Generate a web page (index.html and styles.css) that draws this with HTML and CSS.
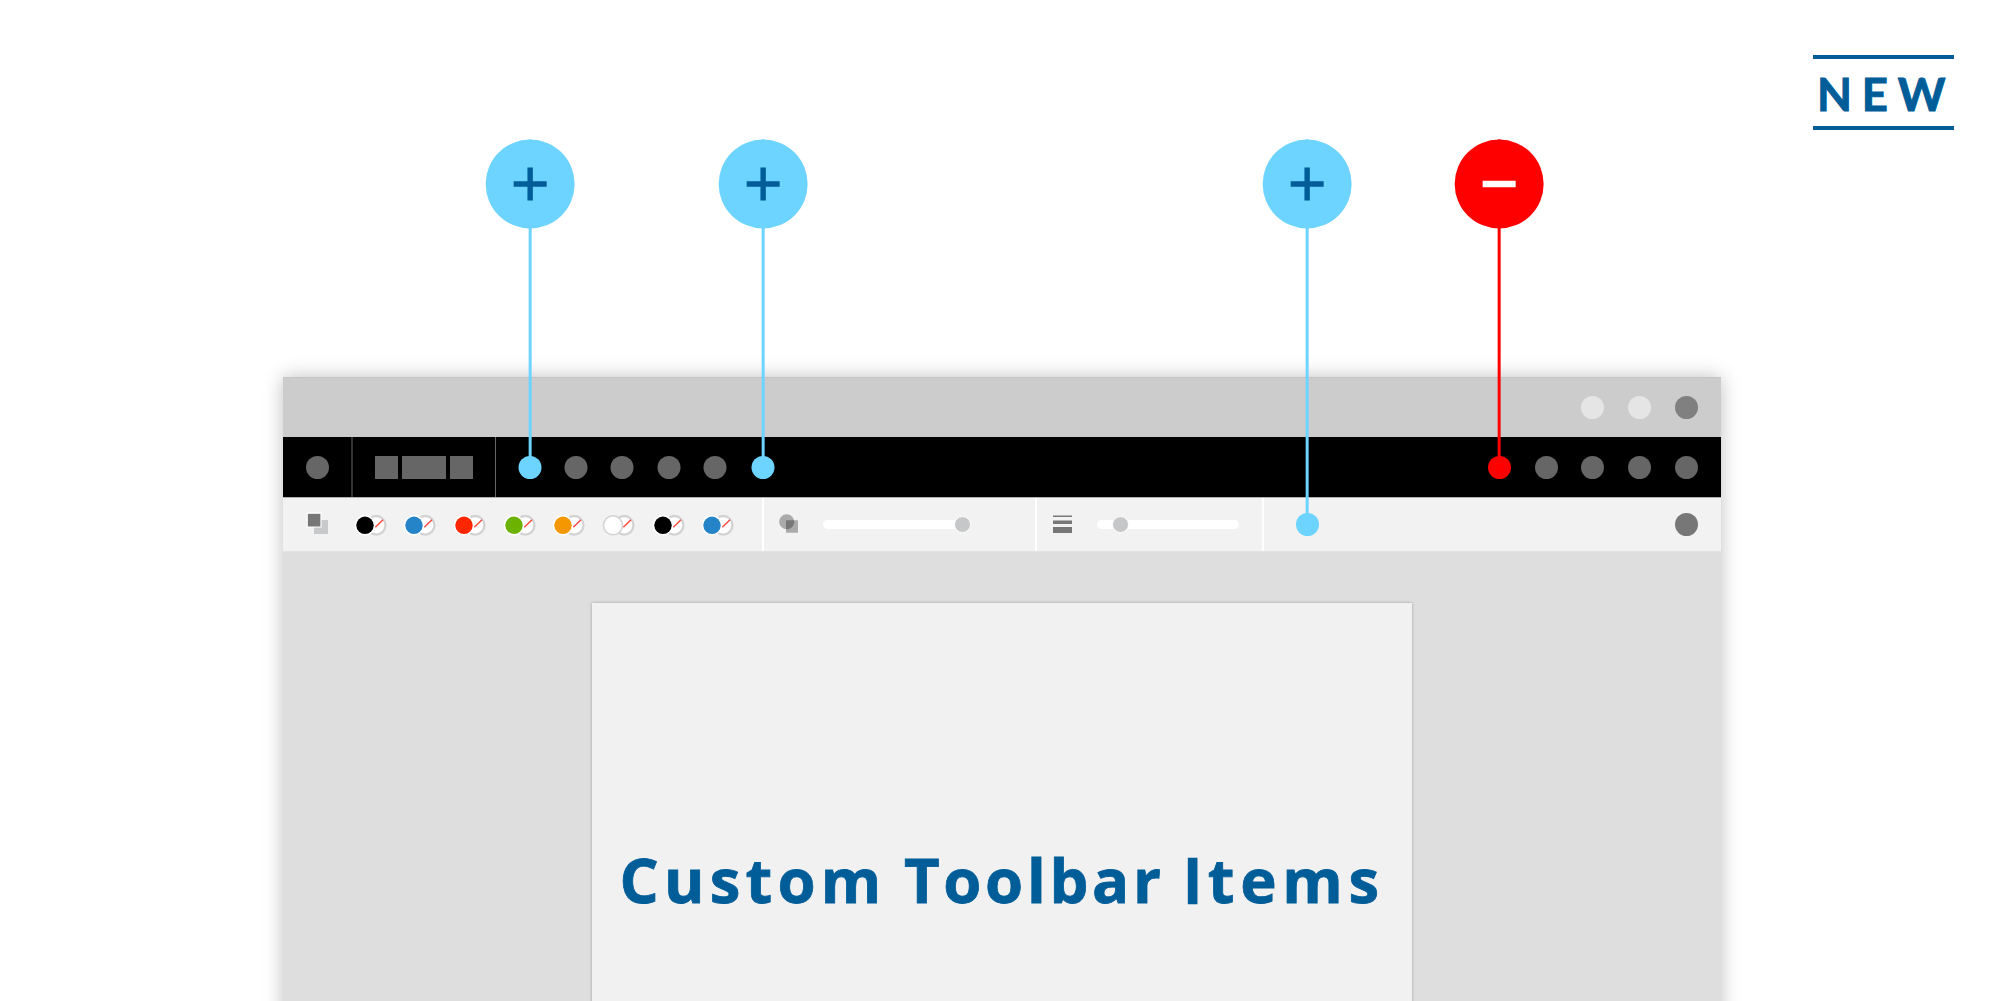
FILE: index.html
```html
<!DOCTYPE html>
<html lang="en">
<head>
<meta charset="utf-8">
<title>Custom Toolbar Items</title>
<link rel="stylesheet" href="styles.css">
</head>
<body>
<svg class="defs" width="0" height="0" aria-hidden="true">
  <symbol id="stroke-none" viewBox="0 0 34 24">
    <circle cx="22.2" cy="12.3" r="9.3" fill="#fff" stroke="#d3d3d3" stroke-width="2.3"/>
    <path d="M21.3 14.2 29 6.8" stroke="#fb4a40" stroke-width="1.5"/>
    <circle class="halo" cx="11" cy="12.3" r="10.3"/>
    <circle cx="11" cy="12.3" r="8.7" fill="currentColor"/>
  </symbol>
</svg>
<main class="scene">
  <div class="badge">NEW</div>
  <section class="window">
    <div class="titlebar">
      <i class="dot pale"></i><i class="dot pale"></i><i class="dot mid"></i>
    </div>
    <nav class="menubar">
      <div class="menu-group first"><i class="dot"></i></div>
      <div class="menu-group pager"><i class="block"></i><i class="block wide"></i><i class="block"></i></div>
      <div class="menu-group tools"><i class="dot added"></i><i class="dot"></i><i class="dot"></i><i class="dot"></i><i class="dot"></i><i class="dot added last"></i></div>
      <div class="menu-group end"><i class="dot removed"></i><i class="dot"></i><i class="dot"></i><i class="dot"></i><i class="dot"></i></div>
    </nav>
    <div class="toolbar">
      <div class="group colors">
        <svg class="layers" width="23" height="23" viewBox="0 0 23 23"><path fill="#c8c9ca" d="M8 8h14v14H8z"/><path fill="#777" stroke="#fff" stroke-width="1.2" d="M1.2 1.2h13.8v13.8H1.2z"/></svg>
        <div class="swatches">
          <svg class="swatch black"><use href="#stroke-none"/></svg>
          <svg class="swatch blue"><use href="#stroke-none"/></svg>
          <svg class="swatch red"><use href="#stroke-none"/></svg>
          <svg class="swatch green"><use href="#stroke-none"/></svg>
          <svg class="swatch orange"><use href="#stroke-none"/></svg>
          <svg class="swatch white"><use href="#stroke-none"/></svg>
          <svg class="swatch black"><use href="#stroke-none"/></svg>
          <svg class="swatch blue"><use href="#stroke-none"/></svg>
        </div>
      </div>
      <div class="group opacity">
        <svg width="20" height="20" viewBox="0 0 20 20"><circle cx="7.7" cy="7.7" r="7.5" fill="#aaa"/><path fill="#aaa" d="M7 6.3h12v12.4H7z"/><path fill="#777" d="M7 6.3h8.1A7.5 7.5 0 0 1 7 15.2z"/></svg>
        <div class="slider full"><i class="thumb"></i></div>
      </div>
      <div class="group thickness">
        <svg width="19" height="19" viewBox="0 0 19 19"><path fill="#777" d="M0 .4h19v1.6H0zM0 5.5h19v3.6H0zM0 12h19v6.1H0z"/></svg>
        <div class="slider"><i class="thumb"></i></div>
      </div>
      <div class="group extra"><i class="dot added"></i><i class="dot dark"></i></div>
    </div>
    <div class="canvas">
      <article class="page"><h1><span class="loose">Custom</span> Toolbar <span class="looser"><span class="plain-i">I</span>tems</span></h1></article>
    </div>
  </section>

  <div class="callout c1"><svg class="bubble" viewBox="0 0 89 89"><path d="M28 44.5h33M44.5 28v33"/></svg></div>
  <div class="callout c2"><svg class="bubble" viewBox="0 0 89 89"><path d="M28 44.5h33M44.5 28v33"/></svg></div>
  <div class="callout c3"><svg class="bubble" viewBox="0 0 89 89"><path d="M28 44.5h33M44.5 28v33"/></svg></div>
  <div class="callout c4 remove"><svg class="bubble" viewBox="0 0 89 89"><path d="M28 44.5h33"/></svg></div>
</main>
</body>
</html>
```
FILE: styles.css
```css
* { box-sizing: border-box; }
body { margin: 0; background: #fff; }
svg { display: block; flex: none; }
.defs { position: absolute; }
.scene {
  position: relative;
  width: 2001px;
  height: 1001px;
  padding: 377px 280px 0 283px;
  overflow: hidden;
}
.badge {
  position: absolute;
  left: 1813px;
  top: 55px;
  width: 141px;
  height: 75px;
  padding-left: 4px;
  border: solid #005d98;
  border-width: 4px 0;
  color: #005d98;
  font: 700 45.4px/70px Lato, sans-serif;
  -webkit-text-stroke: 1px #005d98;
  letter-spacing: 9.8px;
  white-space: nowrap;
}
.window {
  display: flex;
  flex-direction: column;
  width: 1438px;
  height: 660px;
  box-shadow: 0 0 18px rgba(0, 0, 0, .25);
}
.dot {
  flex: none;
  width: 23px;
  height: 23px;
  border-radius: 50%;
  background: #666;
}
.dot.pale { background: #e5e5e5; }
.dot.mid { background: #808080; }
.dot.dark { background: #777; }
.dot.added { background: #6dd3ff; }
.dot.removed { background: #f00; }
.titlebar {
  display: flex;
  flex: none;
  justify-content: flex-end;
  align-items: center;
  gap: 23.8px;
  height: 60px;
  padding-right: 23px;
  background: #ccc;
  border-top: 1px solid #c5c5c5;
}
.menubar {
  display: flex;
  flex: none;
  height: 60px;
  background: #000;
}
.menu-group { display: flex; align-items: center; }
.menu-group.first { width: 70px; padding-left: 23px; border-right: 2px solid #333; }
.menu-group.pager { width: 143px; padding-left: 22px; gap: 4px; border-right: 1px solid #666; }
.block { width: 23px; height: 23px; background: #666; }
.block.wide { width: 44px; }
.menu-group.tools { padding-left: 22px; gap: 23.2px; transform: translateX(.5px); }
.menu-group .last { margin-left: 2.2px; }
.menu-group.end { margin-left: auto; padding-right: 23px; gap: 23.8px; }
.toolbar {
  display: flex;
  flex: none;
  height: 54px;
  background: #f2f2f2;
  border-top: 1px solid #b0b0b0;
}
.group { display: flex; align-items: center; border-right: 2px solid #fff; }
.colors { width: 481px; padding-left: 23px; }
.layers { margin-top: -3px; }
.swatches { display: flex; gap: 15.7px; margin-left: 24.5px; }
.swatch { --halo: #fff; width: 34px; height: 24px; }
.black { color: #000; }
.blue { color: #2583c8; }
.red { color: #ff2600; }
.green { color: #6cb200; }
.orange { color: #f59700; }
.white { --halo: #d3d3d3; color: #fff; }
.halo { fill: var(--halo); }
.opacity { width: 273px; padding-left: 15px; gap: 24px; }
.slider {
  display: flex;
  align-items: center;
  width: 142px;
  height: 9px;
  padding-left: 15px;
  border-radius: 5px;
  background: #fff;
}
.slider.full { padding-left: 131px; }
.opacity svg { margin-top: -1px; }
.thumb {
  flex: none;
  width: 17px;
  height: 17px;
  border: 1px solid #fff;
  border-radius: 50%;
  background: #c6c7c8;
}
.thickness { width: 227px; padding-left: 16px; gap: 25px; }
.thickness svg { margin-top: -1px; }
.extra { flex: 1; justify-content: space-between; padding: 0 23px 0 32px; border: 0; }
.canvas {
  display: flex;
  justify-content: center;
  flex: 1;
  padding-top: 51px;
  background: #dedede;
  border-top: 1px solid #e3e3e3;
}
.page {
  width: 820px;
  height: 480px;
  padding-top: 234px;
  background: #f1f1f1;
  box-shadow: 0 0 3px rgba(0, 0, 0, .28);
}
h1 {
  margin: 0;
  padding-left: 27.5px;
  color: #005d98;
  font: 700 61.6px/84px "Open Sans", sans-serif;
  -webkit-text-stroke: .8px #005d98;
  letter-spacing: 3.7px;
  word-spacing: -2.2px;
  white-space: nowrap;
}
.loose { letter-spacing: 5.2px; }
.looser { letter-spacing: 5.7px; }
.plain-i {
  margin-left: 1px;
  font-weight: 600;
  -webkit-text-stroke: 2.4px #005d98;
}
.callout {
  position: absolute;
  top: 139px;
  width: 89px;
  height: 328px;
  color: #6dd3ff;
  background: linear-gradient(currentColor, currentColor) center / 3px 100% no-repeat;
  transform: translate(-.35px, .5px);
}
.bubble {
  width: 89px;
  height: 89px;
  border-radius: 50%;
  background: currentColor;
  fill: none;
  stroke: #005d98;
  stroke-width: 5.4px;
}
.c1 { left: 486px; }
.c2 { left: 719px; }
.c3 { left: 1263px; height: 380px; }
.c4 { left: 1455px; }
.remove { color: #f00; }
.remove .bubble { stroke: #fff; stroke-width: 6.4px; }
```
